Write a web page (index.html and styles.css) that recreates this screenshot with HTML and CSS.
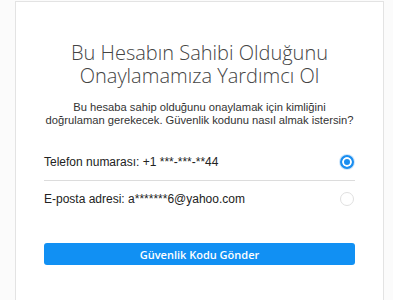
FILE: index.html
```html
<!DOCTYPE html>
<html lang="tr">

<head>
    <meta charset="UTF-8" />
    <meta name="viewport" content="width=device-width, initial-scale=1.0" />
    <title>Hesap Doğrulama</title>
    <link rel="stylesheet" href="styles.css">
</head>

<body>
    <div class="verify-card">
        <h1 class="title">Bu Hesabın Sahibi Olduğunu<br>Onaylamamıza Yardımcı Ol</h1>
        <p class="lead">Bu hesaba sahip olduğunu onaylamak için kimliğini<br>doğrulaman gerekecek. Güvenlik kodunu nasıl almak istersin?</p>

        <form class="options">
            <label class="option">
                <span>Telefon numarası: +1 ***-***-**44</span>
                <input type="radio" name="method" checked />
                <span class="radio"></span>
            </label>
            <label class="option">
                <span>E-posta adresi: a*******6@yahoo.com</span>
                <input type="radio" name="method" />
                <span class="radio"></span>
            </label>
            <button type="button" class="btn">Güvenlik Kodu Gönder</button>
        </form>
    </div>
</body>

</html>
```

FILE: styles.css
```css
*,
*::before,
*::after {
    box-sizing: border-box;
    margin: 0;
    padding: 0;
}

body {
    font-family: 'Liberation Sans', Arial, sans-serif;
    background: #fbfbfb;
    color: #333;
    padding: 1px 9px 0 15px;
    overflow: hidden;
}

.verify-card {
    background: #fff;
    border: 1px solid #e3e3e3;
    padding: 39px 28px 60px;
    height: 340px;
}

.title {
    font-family: 'Open Sans', 'Noto Sans', sans-serif;
    font-weight: 300;
    font-size: 20px;
    line-height: 23px;
    color: #444;
    text-align: center;
}

.lead {
    margin-top: 14px;
    font-size: 11.2px;
    line-height: 13px;
    text-align: center;
    color: #333;
    white-space: nowrap;
}

.options {
    margin-top: 16px;
}

.option {
    display: flex;
    align-items: center;
    justify-content: space-between;
    height: 37px;
    font-size: 12px;
    color: #222;
    cursor: pointer;
}

.option + .option {
    height: 36px;
    border-top: 1px solid #dcdcdc;
}

.option input {
    display: none;
}

.radio {
    width: 14px;
    height: 14px;
    border-radius: 50%;
    border: 1px solid #e0e0e0;
    margin-right: 1px;
}

.option input:checked + .radio {
    border: 2px solid #1a8ef0;
    box-shadow: inset 0 0 0 2px #fff, 0 0 0 1px #cfe6fb;
    background: #1a8ef0;
}

.btn {
    display: block;
    width: 100%;
    height: 22px;
    margin-top: 27px;
    border: none;
    border-radius: 3px;
    background: #1190f3;
    color: #fff;
    font-family: 'Open Sans', 'Noto Sans', sans-serif;
    font-size: 11px;
    font-weight: 600;
    cursor: pointer;
}
```
